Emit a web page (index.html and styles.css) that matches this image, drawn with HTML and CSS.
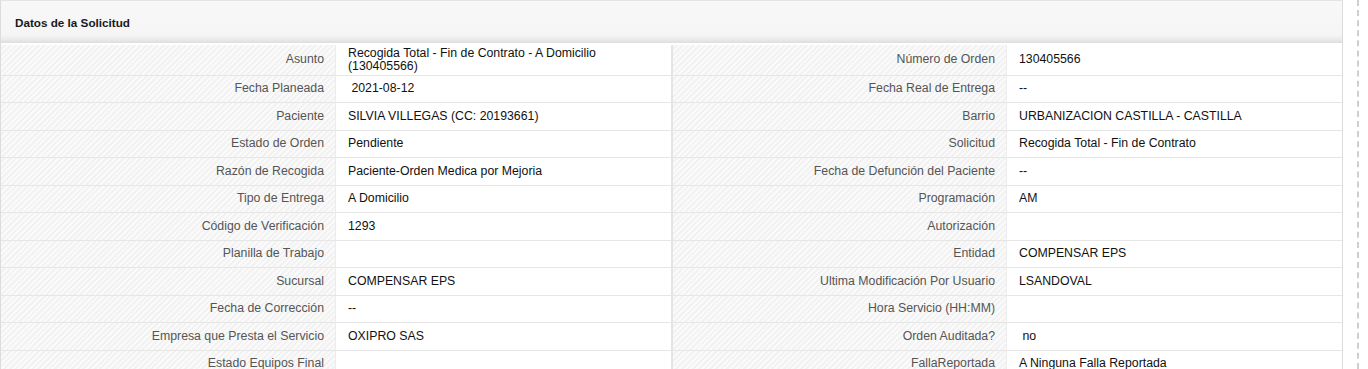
FILE: index.html
```html
<!DOCTYPE html>
<html lang="es">
<head>
<meta charset="utf-8">
<title>Datos de la Solicitud</title>
<link rel="stylesheet" href="styles.css">
</head>
<body>
<div class="page">
  <div class="panel">
    <div class="panel-header">Datos de la Solicitud</div>
    <div class="grid">
      <div class="row first">
        <div class="lbl">Asunto</div><div class="val">Recogida Total - Fin de Contrato - A Domicilio<br>(130405566)</div>
        <div class="sep"></div>
        <div class="lbl">Número de Orden</div><div class="val">130405566</div>
      </div>
      <div class="row">
        <div class="lbl">Fecha Planeada</div><div class="val">&nbsp;2021-08-12</div>
        <div class="sep"></div>
        <div class="lbl">Fecha Real de Entrega</div><div class="val">--</div>
      </div>
      <div class="row">
        <div class="lbl">Paciente</div><div class="val">SILVIA VILLEGAS (CC: 20193661)</div>
        <div class="sep"></div>
        <div class="lbl">Barrio</div><div class="val">URBANIZACION CASTILLA - CASTILLA</div>
      </div>
      <div class="row">
        <div class="lbl">Estado de Orden</div><div class="val">Pendiente</div>
        <div class="sep"></div>
        <div class="lbl">Solicitud</div><div class="val">Recogida Total - Fin de Contrato</div>
      </div>
      <div class="row">
        <div class="lbl">Razón de Recogida</div><div class="val">Paciente-Orden Medica por Mejoria</div>
        <div class="sep"></div>
        <div class="lbl">Fecha de Defunción del Paciente</div><div class="val">--</div>
      </div>
      <div class="row">
        <div class="lbl">Tipo de Entrega</div><div class="val">A Domicilio</div>
        <div class="sep"></div>
        <div class="lbl">Programación</div><div class="val">AM</div>
      </div>
      <div class="row">
        <div class="lbl">Código de Verificación</div><div class="val">1293</div>
        <div class="sep"></div>
        <div class="lbl">Autorización</div><div class="val"></div>
      </div>
      <div class="row">
        <div class="lbl">Planilla de Trabajo</div><div class="val"></div>
        <div class="sep"></div>
        <div class="lbl">Entidad</div><div class="val">COMPENSAR EPS</div>
      </div>
      <div class="row">
        <div class="lbl">Sucursal</div><div class="val">COMPENSAR EPS</div>
        <div class="sep"></div>
        <div class="lbl">Ultima Modificación Por Usuario</div><div class="val">LSANDOVAL</div>
      </div>
      <div class="row">
        <div class="lbl">Fecha de Corrección</div><div class="val">--</div>
        <div class="sep"></div>
        <div class="lbl">Hora Servicio (HH:MM)</div><div class="val"></div>
      </div>
      <div class="row">
        <div class="lbl">Empresa que Presta el Servicio</div><div class="val">OXIPRO SAS</div>
        <div class="sep"></div>
        <div class="lbl">Orden Auditada?</div><div class="val">&nbsp;no</div>
      </div>
      <div class="row">
        <div class="lbl">Estado Equipos Final</div><div class="val"></div>
        <div class="sep"></div>
        <div class="lbl">FallaReportada</div><div class="val">A Ninguna Falla Reportada</div>
      </div>
    </div>
  </div>
  <div class="dash"></div>
</div>
</body>
</html>
```

FILE: styles.css
```css
html, body {
  margin: 0;
  padding: 0;
  background: #ffffff;
}
body {
  font-family: "Liberation Sans", Arial, sans-serif;
  font-size: 12.3px;
  color: #222;
  height: 369px;
  overflow: hidden;
}
.page {
  display: flex;
  align-items: stretch;
  min-height: 369px;
}
.panel {
  width: 1341px;
  border: 1px solid #dcdcdc;
  border-top-color: #e4e4e4;
  flex: none;
}
.panel-header {
  height: 42px;
  box-sizing: border-box;
  padding-left: 14px;
  display: flex;
  align-items: center;
  font-size: 11.7px;
  font-weight: bold;
  color: #1a1a1a;
  background: linear-gradient(to bottom, #f8f8f8 0, #f5f5f5 34px, #ececec 38px, #dedede 42px);
}
.grid {
  display: flex;
  flex-direction: column;
}
.row {
  display: grid;
  grid-template-columns: 335px 335px 2px 334px 335px;
  min-height: 26.5px;
  border-bottom: 1px solid #e6e6e6;
}
.row.first {
  min-height: 30px;
  margin-top: 1.5px;
}
.lbl, .val {
  display: flex;
  align-items: center;
  line-height: 13px;
  padding: 2px 0;
}
.lbl {
  justify-content: flex-end;
  padding-right: 11px;
  color: #555;
  background-color: #f5f5f5;
  background-image: repeating-linear-gradient(135deg, rgba(255,255,255,0.5) 0 2px, rgba(0,0,0,0.012) 2px 4px);
  border-right: 1px solid #ececec;
}
.val {
  padding-left: 12px;
  color: #111;
  background: #ffffff;
}
.sep {
  background: #e4e4e4;
}
.dash {
  margin-left: 14px;
  width: 0;
  border-left: 2px dashed #cfcfcf;
}
```
